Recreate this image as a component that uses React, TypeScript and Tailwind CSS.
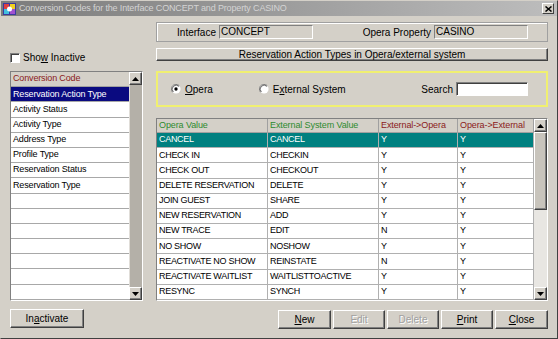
import React from "react";

const font = "font-['Liberation_Sans',Arial,sans-serif]";

const raised =
  "border border-t-white border-l-white border-b-[#404040] border-r-[#404040] shadow-[inset_-1px_-1px_0_#808080]";
const sunken =
  "border border-t-[#808080] border-l-[#808080] border-b-white border-r-white";

function Arrow({ up }: { up?: boolean }) {
  return (
    <div className={`h-[13px] w-full shrink-0 bg-[#d4d0c8] ${raised} flex items-center justify-center`}>
      <svg width="7" height="4" viewBox="0 0 7 4">
        {up ? <polygon points="0,4 7,4 3.5,0" fill="#000" /> : <polygon points="0,0 7,0 3.5,4" fill="#000" />}
      </svg>
    </div>
  );
}

function ScrollBar({ thumb }: { thumb?: number }) {
  return (
    <div className="flex h-full w-[13px] shrink-0 flex-col bg-[#e6e3de]">
      <Arrow up />
      <div className="flex flex-1 flex-col min-h-0">
        {thumb ? (
          <>
            <div className={`bg-[#c8c4bc] ${raised}`} style={{ height: thumb }} />
            <div className="flex-1 bg-[#e8e6e2]" />
          </>
        ) : (
          <div className={`flex-1 bg-[#b4b0a8] border-l border-[#e0ddd8]`} />
        )}
      </div>
      <Arrow />
    </div>
  );
}

function Btn({ label, u, disabled, w }: { label: string; u: number; disabled?: boolean; w: string }) {
  const a = label.slice(0, u);
  const b = label.slice(u, u + 1);
  const c = label.slice(u + 1);
  return (
    <div
      className={`${w} h-[19px] bg-[#d4d0c8] ${raised} flex items-center justify-center text-[10px] whitespace-nowrap ${
        disabled ? "text-[#a0a0a0] [text-shadow:1px_1px_0_#fff]" : "text-black"
      }`}
    >
      <span>
        {a}
        {disabled ? b : <span className="underline underline-offset-1">{b}</span>}
        {c}
      </span>
    </div>
  );
}

const gridRows = [
  ["CANCEL", "CANCEL", "Y", "Y"],
  ["CHECK IN", "CHECKIN", "Y", "Y"],
  ["CHECK OUT", "CHECKOUT", "Y", "Y"],
  ["DELETE RESERVATION", "DELETE", "Y", "Y"],
  ["JOIN GUEST", "SHARE", "Y", "Y"],
  ["NEW RESERVATION", "ADD", "Y", "Y"],
  ["NEW TRACE", "EDIT", "N", "Y"],
  ["NO SHOW", "NOSHOW", "Y", "Y"],
  ["REACTIVATE NO SHOW", "REINSTATE", "N", "Y"],
  ["REACTIVATE WAITLIST", "WAITLISTTOACTIVE", "Y", "Y"],
  ["RESYNC", "SYNCH", "Y", "Y"],
];

const listItems = [
  "Reservation Action Type",
  "Activity Status",
  "Activity Type",
  "Address Type",
  "Profile Type",
  "Reservation Status",
  "Reservation Type",
  "",
  "",
  "",
  "",
  "",
  "",
  "",
];

function Radio({ checked }: { checked?: boolean }) {
  return (
    <svg width="10" height="10" viewBox="0 0 12 12">
      <circle cx="6" cy="6" r="5.5" fill="#fff" />
      <path d="M10 2 A5.5 5.5 0 0 0 2 10" stroke="#808080" strokeWidth="1" fill="none" />
      <path d="M9.5 2.8 A4.5 4.5 0 0 0 2.8 9.5" stroke="#404040" strokeWidth="1" fill="none" />
      {checked && <circle cx="6" cy="6" r="2" fill="#000" />}
    </svg>
  );
}

export default function App() {
  return (
    <div className={`${font} w-[558px] h-[339px] bg-[#d4d0c8] border border-[#404040] border-t-[#d4d0c8] border-l-[#d4d0c8] flex flex-col overflow-hidden text-black whitespace-nowrap`}>
      {/* title bar */}
      <div className="h-[15px] shrink-0 flex items-center bg-gradient-to-r from-[#7c7c7c] to-[#bdbdbd] pl-[2px] pr-[2px]">
        <svg width="13" height="12" viewBox="0 0 13 12">
          <rect x="0" y="0" width="13" height="12" fill="#3a3aa0" />
          <rect x="1" y="1" width="5" height="5" fill="#e04040" />
          <rect x="7" y="1" width="5" height="5" fill="#f0d020" />
          <rect x="1" y="6" width="5" height="5" fill="#40c0e0" />
          <rect x="7" y="6" width="5" height="5" fill="#a050d0" />
          <circle cx="6.5" cy="6" r="2.5" fill="#fff" />
        </svg>
        <span className="ml-[3px] text-[9px] tracking-[-0.15px] text-[#d4d4d4] leading-none">
          Conversion Codes for the Interface CONCEPT and Property CASINO
        </span>
        <div className="ml-auto mr-[1px] w-[12px] h-[11px] bg-[#d4d0c8] border border-t-white border-l-white border-b-[#404040] border-r-[#404040] flex items-center justify-center">
          <svg width="7" height="6" viewBox="0 0 7 6">
            <path d="M0.5 0.5 L6.5 5.5 M6.5 0.5 L0.5 5.5" stroke="#000" strokeWidth="1.5" />
          </svg>
        </div>
      </div>

      {/* body */}
      <div className="flex flex-1 min-h-0 text-[9px]">
        {/* left column */}
        <div className="ml-[9px] w-[133px] flex flex-col">
          <div className="mt-[36px] h-[11px] flex items-center">
            <div className={`w-[10px] h-[10px] bg-white ${sunken} shadow-[inset_1px_1px_0_#404040]`} />
            <span className="ml-[3px] text-[10px]">
              Sho<span className="underline underline-offset-1">w</span> Inactive
            </span>
          </div>
          <div className={`mt-[8px] h-[230px] flex ${sunken}`}>
            <div className="flex-1 flex flex-col bg-[#b8b8b8] overflow-hidden tracking-[-0.15px]">
              <div className="h-[15.2px] shrink-0 flex items-center pl-[2px] text-[#8b1a1a] bg-[#d4d0c8] border-b border-[#a0a0a0]">
                Conversion Code
              </div>
              {listItems.map((t, i) => (
                <div
                  key={i}
                  className={`h-[15.2px] shrink-0 flex items-center pl-[2px] border-b border-[#a8a8a8] ${
                    i === 0 ? "bg-[#0a0a80] text-white" : "bg-white"
                  }`}
                >
                  {t}
                </div>
              ))}
            </div>
            <ScrollBar />
          </div>
          <div className="mt-[8px]">
            <Btn label="Inactivate" u={2} w="w-[74px]" />
          </div>
        </div>

        {/* right column */}
        <div className="ml-[13px] w-[392px] flex flex-col">
          <div className="mt-[6px] h-[20px] border border-[#a0a0a0] shadow-[inset_1px_1px_0_#fff] flex items-center text-[10px]">
            <span className="w-[59px] text-right">Interface</span>
            <div className={`ml-[3px] w-[94px] h-[14px] ${sunken} flex items-center pl-[1px] leading-none`}>CONCEPT</div>
            <span className="ml-auto">Opera Property</span>
            <div className={`ml-[3px] mr-[19px] w-[94px] h-[14px] ${sunken} flex items-center pl-[1px] leading-none`}>CASINO</div>
          </div>
          <div className={`mt-[6px] h-[13px] ${raised} flex items-center justify-center leading-none text-[10px]`}>
            Reservation Action Types in Opera/external system
          </div>
          <div className="mt-[10px] h-[36px] border-2 border-[#f0f070] flex items-center text-[10px]">
            <div className="ml-[13px] flex">
              <Radio checked />
            </div>
            <span className="ml-[4px]">
              <span className="underline underline-offset-1">O</span>pera
            </span>
            <div className="ml-[46px] flex">
              <Radio />
            </div>
            <span className="ml-[4px]">
              E<span className="underline underline-offset-1">x</span>ternal System
            </span>
            <span className="ml-auto">Search</span>
            <div className={`ml-[3px] mr-[18px] w-[72px] h-[14px] bg-white ${sunken} shadow-[inset_1px_1px_0_#404040]`} />
          </div>

          {/* grid */}
          <div className={`mt-[11px] h-[183px] shrink-0 flex ${sunken}`}>
            <div className="flex-1 grid grid-cols-[111px_111px_79px_1fr] grid-rows-[14px_repeat(11,minmax(0,1fr))] bg-white overflow-hidden tracking-[-0.3px]">
              {["Opera Value", "External System Value", "External->Opera", "Opera->External"].map((h, i) => (
                <div
                  key={h}
                  className={`flex items-center pl-[2px] bg-[#d4d0c8] border-r border-b border-[#a0a0a0] overflow-hidden tracking-[-0.1px] ${
                    i < 2 ? "text-[#2e8b2e]" : "text-[#8b1a1a]"
                  }`}
                >
                  {h}
                </div>
              ))}
              {gridRows.map((r, ri) =>
                r.map((c, ci) => (
                  <div
                    key={`${ri}-${ci}`}
                    className={`flex items-center pl-[2px] border-r border-b border-[#b0b0b0] overflow-hidden ${
                      ri === 0 ? "bg-[#008080] text-white" : "bg-white"
                    }`}
                  >
                    {c}
                  </div>
                ))
              )}
            </div>
            <ScrollBar thumb={78} />
          </div>

          <div className="mt-[9px] flex items-center justify-end gap-[2px]">
            <Btn label="New" u={0} w="w-[53px]" />
            <Btn label="Edit" u={1} disabled w="w-[52px]" />
            <Btn label="Delete" u={0} disabled w="w-[52px]" />
            <Btn label="Print" u={0} w="w-[52px]" />
            <Btn label="Close" u={0} w="w-[53px]" />
          </div>
        </div>
      </div>
    </div>
  );
}
